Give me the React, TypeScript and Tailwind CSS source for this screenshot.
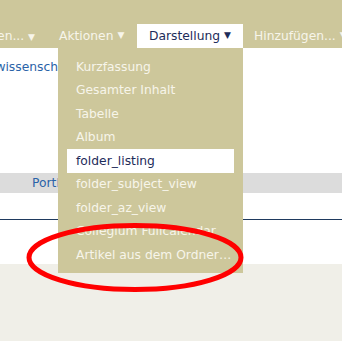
import React from "react";

const items = [
  "Kurzfassung",
  "Gesamter Inhalt",
  "Tabelle",
  "Album",
  "folder_listing",
  "folder_subject_view",
  "folder_az_view",
  "Collegium Fullcalendar",
  "Artikel aus dem Ordner…",
];

export default function App() {
  return (
    <div
      className="relative w-[342px] h-[341px] overflow-hidden bg-white text-[12.3px]"
      style={{ fontFamily: '"DejaVu Sans", Verdana, sans-serif' }}
    >
      {/* Top menu bar */}
      <div className="relative z-10 h-[48px] bg-[#cdc79b] pt-[24px]">
        <div className="flex h-[24px] items-center whitespace-nowrap">
          <div className="flex w-[47px] shrink-0 justify-end overflow-hidden pr-3 text-[#f7f5ea]">
            <span className="shrink-0">Ansichten... <span className="text-[9px]">▼</span></span>
          </div>
          <div className="flex h-full w-[90px] shrink-0 items-center px-3 text-[#f7f5ea]">
            Aktionen <span className="ml-1 text-[9px]">▼</span>
          </div>
          <div className="relative flex h-full w-[106px] shrink-0 items-center justify-center bg-white text-[#1d2c5a]">
            Darstellung <span className="ml-1 text-[9px]">▼</span>
            {/* Dropdown */}
            <div className="absolute right-0 top-full w-[185px] bg-[#cdc79b] pt-[7px] pb-[6px]">
              {items.map((it) => (
                <div
                  key={it}
                  className={
                    "mx-[9px] flex h-[23.5px] items-center whitespace-nowrap px-[9px] " +
                    (it === "folder_listing" ? "bg-white text-[#1d2c5a]" : "text-[#f7f5ea]")
                  }
                >
                  {it}
                </div>
              ))}
            </div>
          </div>
          <div className="flex h-full shrink-0 items-center px-[11px] text-[#f7f5ea]">
            Hinzufügen... <span className="ml-1 text-[9px]">▼</span>
          </div>
        </div>
      </div>

      {/* Page content */}
      <div className="h-[216px] bg-white">
        <div className="flex h-[38px] w-[58px] items-center justify-end overflow-hidden whitespace-nowrap text-[#2b63a8]">
          <span className="shrink-0">Naturwissensch</span>
        </div>
        <div className="h-[87px]" />
        <div className="flex h-[20px] items-center bg-[#dcdcdc] pl-[32px] text-[#2b63a8]">
          Portlets
        </div>
        <div className="h-[26px]" />
        <div className="h-px bg-[#1f3a5f]" />
      </div>
      <div className="h-[80px] bg-[#f0efe8]" />

      {/* Red annotation ellipse */}
      <svg
        className="pointer-events-none absolute left-0 top-0 z-20"
        width="342"
        height="341"
        viewBox="0 0 342 341"
      >
        <ellipse cx="135" cy="257.5" rx="106" ry="32" fill="none" stroke="#ff0000" strokeWidth="5" />
      </svg>
    </div>
  );
}
